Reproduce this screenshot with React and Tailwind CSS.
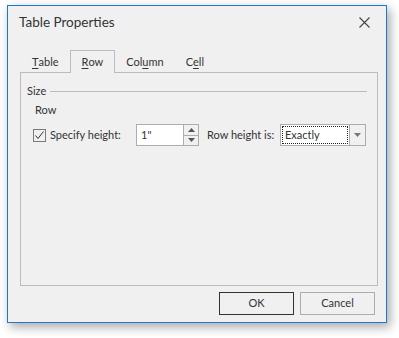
import React from 'react';

const font = { fontFamily: '"Segoe UI", Lato, "Noto Sans", sans-serif' };

function Tab({ label, accel, active }) {
  // accel = index of the underlined letter
  const before = label.slice(0, accel);
  const letter = label[accel];
  const after = label.slice(accel + 1);
  return (
    <div
      className={`px-[11px] flex items-center text-[11px] text-[#333] whitespace-nowrap ${
        active ? 'h-[23px] border border-b-0 border-[#bcbcbc] bg-[#f0f0f0] relative z-10 -mb-px' : 'h-[20px]'
      }`}
    >
      {before}
      <span className="underline underline-offset-2">{letter}</span>
      {after}
    </div>
  );
}

export default function App() {
  return (
    <div className="w-[399px] h-[338px] bg-white pl-[7px] pt-[5px]" style={font}>
      <div className="w-[380px] h-[318px] border border-[#1c78cb] bg-[#f0f0f0] flex flex-col shadow-[3px_4px_10px_rgba(0,0,0,0.35)]">
        {/* title bar */}
        <div className="h-[32px] flex items-center justify-between pl-[11px] pr-[16px] shrink-0">
          <span className="text-[13.5px] text-[#333] whitespace-nowrap">Table Properties</span>
          <svg width="11" height="11" viewBox="0 0 11 11">
            <path d="M0.5 0.5 L10.5 10.5 M10.5 0.5 L0.5 10.5" stroke="#444" strokeWidth="1.1" fill="none" />
          </svg>
        </div>

        {/* tabs */}
        <div className="ml-[13px] mt-[12px] flex items-end h-[22px] shrink-0">
          <Tab label="Table" accel={0} />
          <Tab label="Row" accel={0} active />
          <Tab label="Column" accel={3} />
          <Tab label="Cell" accel={1} />
        </div>

        {/* tab page */}
        <div className="ml-[12px] mr-[8px] h-[214px] border border-[#bcbcbc] shrink-0 px-[6px] pt-[10px] text-[11px] text-[#333] whitespace-nowrap">
          <div className="flex items-center gap-[4px] h-[16px]">
            <span>Size</span>
            <div className="flex-1 h-px bg-[#bcbcbc] mr-[4px]" />
          </div>
          <div className="ml-[8px] mt-[3px] h-[16px] flex items-center">Row</div>
          <div className="ml-[6px] mt-[6px] flex items-center h-[22px]">
            <div className="w-[13px] h-[13px] border border-[#7a7a7a] bg-[#f0f0f0] flex items-center justify-center shrink-0">
              <svg width="11" height="11" viewBox="0 0 11 11">
                <path d="M1.5 5.5 L4 8.5 L9.5 1.5" stroke="#333" strokeWidth="1" fill="none" />
              </svg>
            </div>
            <span className="ml-[4px] w-[86px]">Specify height:</span>
            <div className="flex h-[22px] border border-[#adadad] bg-white">
              <div className="w-[46px] pl-[4px] flex items-center">1"</div>
              <div className="w-[15px] border-l border-[#adadad] bg-[#f0f0f0] flex flex-col">
                <div className="flex-1 flex items-center justify-center border-b border-[#adadad]">
                  <svg width="7" height="4" viewBox="0 0 7 4"><path d="M0 4 L3.5 0 L7 4 Z" fill="#555" /></svg>
                </div>
                <div className="flex-1 flex items-center justify-center">
                  <svg width="7" height="4" viewBox="0 0 7 4"><path d="M0 0 L3.5 4 L7 0 Z" fill="#555" /></svg>
                </div>
              </div>
            </div>
            <span className="ml-[8px] w-[73px]">Row height is:</span>
            <div className="flex h-[22px] border border-[#adadad]">
              <div className="w-[68px] bg-white p-px">
                <div className="h-full border border-dotted border-[#222] flex items-center pl-[2px]">Exactly</div>
              </div>
              <div className="w-[16px] border-l border-[#adadad] bg-[#f0f0f0] flex items-center justify-center">
                <svg width="7" height="4" viewBox="0 0 7 4"><path d="M0 0 L3.5 4 L7 0 Z" fill="#777" /></svg>
              </div>
            </div>
          </div>
        </div>

        {/* buttons */}
        <div className="flex justify-end gap-[6px] mr-[11px] mt-[6px] text-[11px] text-[#333]">
          <button className="w-[75px] h-[23px] border border-[#333] bg-[#f0f0f0]">OK</button>
          <button className="w-[75px] h-[23px] border border-[#adadad] bg-[#f0f0f0]">Cancel</button>
        </div>
      </div>
    </div>
  );
}
